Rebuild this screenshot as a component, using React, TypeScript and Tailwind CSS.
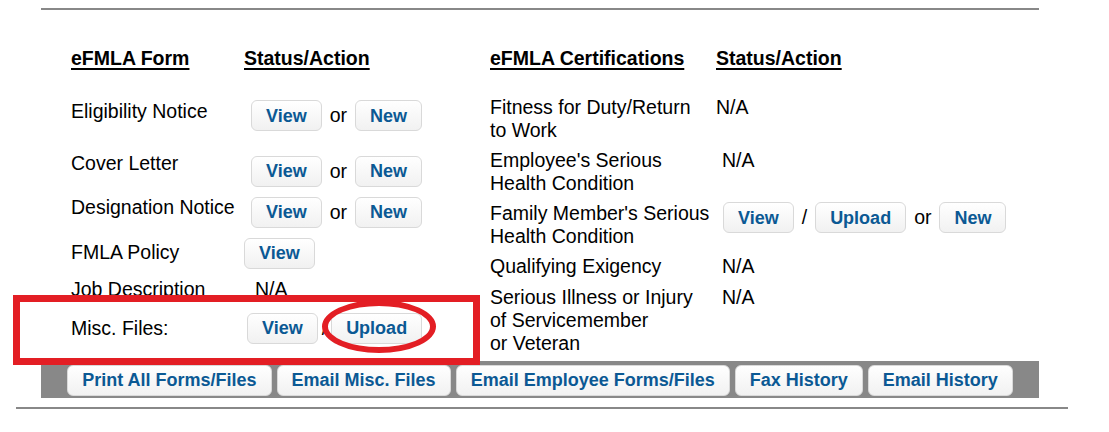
import type { ReactNode } from 'react';

const font = { fontFamily: '"Liberation Sans", Arial, sans-serif' };

function Btn({ children, className = '' }: { children: ReactNode; className?: string }) {
  return (
    <span
      className={`inline-flex h-[31px] items-center justify-center rounded-md border border-[#d9d9d9] bg-gradient-to-b from-white to-[#f1f1f1] px-[14px] text-[18px] font-bold leading-none text-[#0b5994] ${className}`}
    >
      {children}
    </span>
  );
}

function Sep({ children }: { children: ReactNode }) {
  return <span className="text-[19.5px] leading-[23px] text-black">{children}</span>;
}

function Heading({ children, className = '' }: { children: ReactNode; className?: string }) {
  return (
    <span className={`text-[19.5px] font-bold leading-[23px] underline decoration-2 underline-offset-[3px] ${className}`}>
      {children}
    </span>
  );
}

export default function App() {
  return (
    <div className="relative h-[432px] w-[1109px] overflow-hidden bg-white text-black" style={font}>
      <div className="ml-[41px] w-[998px] pt-[8px]">
        <div className="h-[2px] bg-[#888]" />

        <div className="flex text-[19.5px] leading-[23px]">
          {/* left table */}
          <div className="ml-[30px] mt-[37px] w-[419px]">
            <div className="flex">
              <Heading className="w-[173px]">eFMLA Form</Heading>
              <Heading>Status/Action</Heading>
            </div>

            <div className="mt-[29.5px] flex h-[31px] items-start">
              <span className="w-[173px]">Eligibility Notice</span>
              <div className="ml-[7px] mt-[0.5px] flex items-center gap-2">
                <Btn>View</Btn>
                <Sep>or</Sep>
                <Btn>New</Btn>
              </div>
            </div>

            <div className="mt-[21.5px] flex h-[34.5px] items-start">
              <span className="w-[173px]">Cover Letter</span>
              <div className="ml-[7px] mt-[3.5px] flex items-center gap-2">
                <Btn>View</Btn>
                <Sep>or</Sep>
                <Btn>New</Btn>
              </div>
            </div>

            <div className="mt-[9.5px] flex h-[31.5px] items-start">
              <span className="w-[173px]">Designation Notice</span>
              <div className="ml-[7px] mt-[0.5px] flex items-center gap-2">
                <Btn>View</Btn>
                <Sep>or</Sep>
                <Btn>New</Btn>
              </div>
            </div>

            <div className="mt-[10px] flex h-[31px] items-start">
              <span className="mt-[3.5px] w-[173px]">FMLA Policy</span>
              <Btn>View</Btn>
            </div>

            <div className="mt-[9.5px] flex h-[23px] items-start">
              <span className="w-[173px]">Job Description</span>
              <span className="ml-[11px]">N/A</span>
            </div>

            <div className="mt-[11.5px] flex h-[32px] items-start">
              <span className="mt-[4.5px] w-[173px]">Misc. Files:</span>
              <div className="ml-[3px] flex items-center gap-[4px]">
                <Btn>View</Btn>
                <Sep>/</Sep>
                <Btn>Upload</Btn>
              </div>
            </div>
          </div>

          {/* right table */}
          <div className="mt-[37px]">
            <div className="flex">
              <Heading className="w-[226px]">eFMLA Certifications</Heading>
              <Heading>Status/Action</Heading>
            </div>

            <div className="mt-[25.5px] flex">
              <span className="w-[226px]">
                Fitness for Duty/Return
                <br />
                to Work
              </span>
              <span>N/A</span>
            </div>

            <div className="mt-[7px] flex">
              <span className="w-[226px]">
                Employee's Serious
                <br />
                Health Condition
              </span>
              <span className="ml-[6px]">N/A</span>
            </div>

            <div className="mt-[7px] flex">
              <span className="w-[226px]">
                Family Member's Serious
                <br />
                Health Condition
              </span>
              <div className="ml-[7px] mt-[0.5px] flex h-[31px] items-center gap-2">
                <Btn>View</Btn>
                <Sep>/</Sep>
                <Btn>Upload</Btn>
                <Sep>or</Sep>
                <Btn>New</Btn>
              </div>
            </div>

            <div className="mt-[7px] flex">
              <span className="w-[226px]">Qualifying Exigency</span>
              <span className="ml-[6px]">N/A</span>
            </div>

            <div className="mt-[8px] flex">
              <span className="w-[226px]">
                Serious Illness or Injury
                <br />
                of Servicemember
                <br />
                or Veteran
              </span>
              <span className="ml-[6px]">N/A</span>
            </div>
          </div>
        </div>

        <div className="mt-[6px] flex justify-center gap-[5px] bg-[#888] pb-[2px] pt-[4px]">
          <Btn>Print All Forms/Files</Btn>
          <Btn>Email Misc. Files</Btn>
          <Btn>Email Employee Forms/Files</Btn>
          <Btn>Fax History</Btn>
          <Btn>Email History</Btn>
        </div>
      </div>

      <div className="ml-[16px] mt-[9px] h-[2px] w-[1052px] bg-[#888]" />

      {/* red annotation overlay */}
      <div className="pointer-events-none absolute left-[13px] top-[295px] h-[70px] w-[467px] border-[7px] border-[#e31e24]" />
      <div className="pointer-events-none absolute left-[322px] top-[300px] h-[53px] w-[114px] rounded-[50%] border-[6px] border-[#e31e24]" />
    </div>
  );
}
